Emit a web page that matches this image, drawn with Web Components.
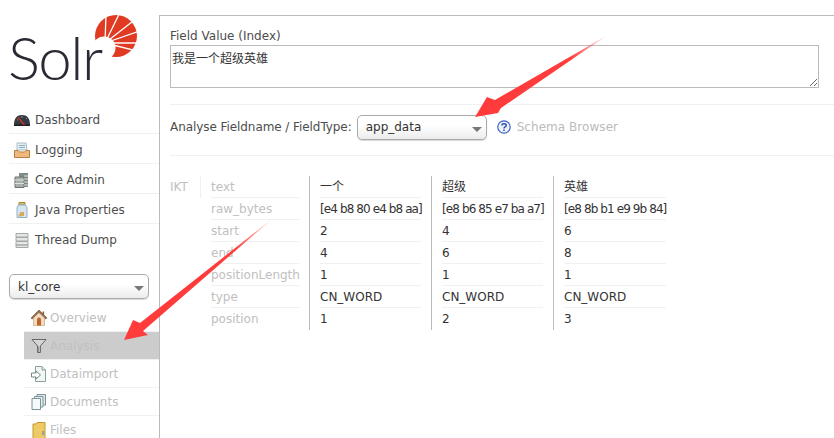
<!DOCTYPE html>
<html>
<head>
  <meta charset="utf-8">
  <title>Solr Admin - Analysis</title>
  <style type="text/css">
    html, body { margin: 0; padding: 0; background: #fff; height: 438px; overflow: hidden; }
    body { font: 12px "DejaVu Sans", "Noto Sans CJK SC", sans-serif; color: #333; }
  </style>
</head>
<body>
  <solr-app>
    <solr-sidebar slot="side">
      <solr-logo></solr-logo>
      <nav-item icon="dashboard">Dashboard</nav-item>
      <nav-item icon="logging">Logging</nav-item>
      <nav-item icon="cores">Core Admin</nav-item>
      <nav-item icon="java">Java Properties</nav-item>
      <nav-item icon="threads" last>Thread Dump</nav-item>
      <core-select>kl_core</core-select>
      <core-menu>
        <nav-item core icon="overview">Overview</nav-item>
        <nav-item core active icon="analysis">Analysis</nav-item>
        <nav-item core icon="dataimport">Dataimport</nav-item>
        <nav-item core icon="documents">Documents</nav-item>
        <nav-item core icon="files" last>Files</nav-item>
      </core-menu>
    </solr-sidebar>
    <analysis-form slot="main"></analysis-form>
    <token-table slot="main"></token-table>
  </solr-app>
  <arrow-overlay></arrow-overlay>

  <script>
  (function() {
    'use strict';

    const CJK = '"DejaVu Sans", "Noto Sans CJK SC", sans-serif';

    // 18x18 icons for the navigation
    const ICONS = {
      dashboard: `<path d="M1 14 C1 7 4 4 9 4 C14 4 17 7 17 14 Z" fill="#333a40"/><path d="M1 13.5 h16 v1.5 h-16 Z" fill="#1d1d1d"/><path d="M5 6.5 L11.5 14" stroke="#d9302c" stroke-width="1.2"/><path d="M4 9 h1 M8 6 h2 M13 7.5 h1" stroke="#8b9298"/>`,
      logging: `<path d="M4 2 H13 L14 9 H4 Z" fill="#e6eef2" stroke="#a9bcc6"/><path d="M6 4.5 h6 M6 6.5 h6" stroke="#8fb0c0"/><path d="M1.5 9.5 H5 L6.5 11 H11.5 L13 9.5 H16.5 V16.5 H1.5 Z" fill="#eeb97c" stroke="#b97f3e"/>`,
      cores: `<path d="M6 2 H15 V16 H6 Z" fill="#7f8a85"/><path d="M2 6 H11 V16.5 H2 Z" fill="#a8aeaa" stroke="#6b736f"/><path d="M2 9 H11 M2 12.5 H11 M11 5 H15 M11 8 H15 M11 11 H15 M11 14 H15" stroke="#dfe3e0"/>`,
      java: `<path d="M6 1.5 H12 V4 H6 Z" fill="#d9b96a" stroke="#a88a3c"/><path d="M5.5 4 H12.5 L14 6.5 V16.5 H4 V6.5 Z" fill="#d5e6f0" stroke="#8fb0c4"/><path d="M7 11 h4 v4 h-4 Z M5.8 13 h3 v2.6 h-3 Z" fill="#dba95b"/>`,
      threads: `<path d="M3 2.5 H15 V6 H3 Z M3 6.5 H15 V10 H3 Z M3 10.5 H15 V14 H3 Z M3 14 H15 V16.5 H3 Z" fill="#e4e7e6" stroke="#a3a8a6"/>`,
      overview: `<path d="M9 1 L17 9 L15.6 10 L9 3.4 L2.4 10 L1 9 Z" fill="#9a6a4a" stroke="#6e4630" stroke-width=".6"/><path d="M3.5 9 L9 3.8 L14.5 9 V16.5 H3.5 Z" fill="#f0dcc0" stroke="#b89a78" stroke-width=".6"/><path d="M7 10.5 a2 2 0 0 1 4 0 V16.5 H7 Z" fill="#c4622e"/><path d="M12.5 2.5 h1.6 V6 h-1.6 Z" fill="#8a5a3c"/>`,
      analysis: `<path d="M2 2.5 H16 L10.4 9 V15.5 H7.6 V9 Z" fill="#d6d6d6" stroke="#666" stroke-width="1"/><path d="M8.7 9.5 V15" stroke="#888"/>`,
      dataimport: `<path d="M5.5 1.5 H12 L15.5 5 V16.5 H5.5 Z" fill="#f2f6f4" stroke="#8aa09a"/><path d="M12 1.5 V5 H15.5" fill="#dfe8e5" stroke="#8aa09a"/><path d="M1.5 8 H6 V6 L10.5 10 L6 14 V12 H1.5 Z" fill="#fff" stroke="#6e8a82"/>`,
      documents: `<path d="M7 1.5 H15.5 V12 H7 Z" fill="#dfe8ea" stroke="#7d9298"/><path d="M4.5 3.5 H13 V14 H4.5 Z" fill="#e9f0f2" stroke="#7d9298"/><path d="M2 5.5 H10.5 V16.5 H2 Z" fill="#f6fafb" stroke="#7d9298"/>`,
      files: `<path d="M3 3 H6 L7 1.5 H15 V18 H3 Z" fill="#efc964" stroke="#c39a34"/><path d="M13 10 v4" stroke="#7a90b0" stroke-width="1.4"/>`
    };

    customElements.define('solr-app', class extends HTMLElement {
      constructor() {
        super();
        this.attachShadow({mode: 'open'}).innerHTML = `
          <style>
            :host { display: flex; height: 438px; overflow: hidden; }
            aside { flex: 0 0 159px; }
            main {
              flex: 1; margin-top: 15px; padding: 0 0 0 10px;
              border-top: 1px solid #bbb; border-left: 1px solid #bbb;
            }
          </style>
          <aside><slot name="side"></slot></aside>
          <main><slot name="main"></slot></main>`;
      }
    });

    customElements.define('solr-sidebar', class extends HTMLElement {
      constructor() {
        super();
        this.attachShadow({mode: 'open'}).innerHTML = `
          <style>
            :host { display: flex; flex-direction: column; padding-left: 9px; }
          </style>
          <slot></slot>`;
      }
    });

    customElements.define('solr-logo', class extends HTMLElement {
      constructor() {
        super();
        let rays = '';
        // white cuts fan out from the bottom-left of the sun
        [-88, -64, -38, -19, 0, 14].forEach(a => {
          rays += `<line x1="0" y1="0" x2="50" y2="0" transform="translate(105 43) rotate(${a})" stroke="#fff" stroke-width="1.3"/>`;
        });
        this.attachShadow({mode: 'open'}).innerHTML = `
          <style>
            :host { display: block; height: 104px; margin-left: -9px; position: relative; }
            span {
              position: relative; display: block; padding: 24px 0 0 8px;
              font: 300 60px/66px Lato, sans-serif; color: #2a2a35;
              letter-spacing: -1.5px;
            }
            svg { position: absolute; left: 0; top: 0; }
          </style>
          <svg width="159" height="104" viewBox="0 0 159 104">
            <circle cx="116" cy="36" r="21" fill="#e03a22"/>
            <circle cx="104" cy="48" r="11.5" fill="#fff"/>
            ${rays}
          </svg>
          <span>Solr</span>`;
      }
    });

    customElements.define('nav-item', class extends HTMLElement {
      constructor() {
        super();
        const core = this.hasAttribute('core');
        const active = this.hasAttribute('active');
        this.attachShadow({mode: 'open'}).innerHTML = `
          <style>
            :host {
              display: flex; align-items: center; box-sizing: border-box;
              height: ${core ? 28 : 30}px; gap: ${core ? 2 : 4}px;
              padding: ${core ? 0 : 2}px 0 0 ${core ? 6 : 4}px;
              border-bottom: 1px solid ${this.hasAttribute('last') ? 'transparent' : '#f0f0f0'};
              color: ${core ? '#c0c0c0' : '#4d4d4d'};
              background: ${active ? '#ccc' : 'transparent'};
            }
            svg { flex: none; }
          </style>
          <svg width="18" height="18" viewBox="0 0 18 18">${ICONS[this.getAttribute('icon')]}</svg>
          <slot></slot>`;
      }
    });

    // shared look of the two dropdown buttons
    const selectCss = `
      border: 1px solid #aaa; border-radius: 5px; box-sizing: border-box;
      background: linear-gradient(#fff 40%, #ececec);
      box-shadow: 0 1px 1px rgba(0,0,0,.15);
      display: flex; align-items: center; justify-content: space-between; color: #333;`;

    customElements.define('core-select', class extends HTMLElement {
      constructor() {
        super();
        this.attachShadow({mode: 'open'}).innerHTML = `
          <style>
            :host { ${selectCss} width: 140px; height: 25px; margin-top: 20px; padding: 0 4px 0 8px; }
            i { border: 5px solid transparent; border-top: 5px solid #777; border-bottom: 0; margin-top: 4px; }
          </style>
          <slot></slot><i></i>`;
      }
    });

    customElements.define('core-menu', class extends HTMLElement {
      constructor() {
        super();
        this.attachShadow({mode: 'open'}).innerHTML = `
          <style>
            :host { display: block; margin: 5px 0 0 15px; }
          </style>
          <slot></slot>`;
      }
    });

    customElements.define('analysis-form', class extends HTMLElement {
      constructor() {
        super();
        this.attachShadow({mode: 'open'}).innerHTML = `
          <style>
            :host { display: block; font-family: ${CJK}; }
            label { display: block; padding-top: 13px; height: 16px; line-height: 14px; color: #4d4d4d; }
            textarea {
              display: block; box-sizing: border-box; width: 649px; height: 43px; margin: 0;
              padding: 5px 1px; border: 1px solid #bbb; border-radius: 0; outline: 0;
              font: 12px/16px ${CJK}; color: #333; background: #fff;
            }
            .type {
              display: flex; align-items: center; box-sizing: border-box; height: 52px;
              margin-top: 16px; padding-bottom: 6px;
              border-top: 1px solid #f0f0f0; border-bottom: 1px solid #f0f0f0; color: #4d4d4d;
              letter-spacing: -0.07px;
            }
            .select {
              ${selectCss} width: 130px; height: 25px; margin-left: 5px; padding: 0 4px 0 8px;
              letter-spacing: 0;
            }
            .select i { border: 5px solid transparent; border-top: 5px solid #777; border-bottom: 0; margin-top: 4px; }
            svg { margin: 0 6px 0 10px; flex: none; }
            .schema { color: #bbb; letter-spacing: 0.05px; }
          </style>
          <label>Field Value (Index)</label>
          <textarea>我是一个超级英雄</textarea>
          <div class="type">
            <span>Analyse Fieldname / FieldType:</span>
            <div class="select"><span>app_data</span><i></i></div>
            <svg width="14" height="14" viewBox="0 0 14 14">
              <circle cx="7" cy="7" r="6.2" fill="#eef2fb" stroke="#3f62c8" stroke-width="1.2"/>
              <path d="M5 5.4 C5 3.2 9.2 3.2 9.2 5.4 C9.2 7 7 6.8 7 8.4 M7 9.6 V11" fill="none" stroke="#3252b4" stroke-width="1.5"/>
            </svg>
            <span class="schema">Schema Browser</span>
          </div>`;
      }
    });

    customElements.define('token-table', class extends HTMLElement {
      constructor() {
        super();
        const keys = ['text', 'raw_bytes', 'start', 'end', 'positionLength', 'type', 'position'];
        const tokens = [
          ['一个', '[e4 b8 80 e4 b8 aa]', '2', '4', '1', 'CN_WORD', '1'],
          ['超级', '[e8 b6 85 e7 ba a7]', '4', '6', '1', 'CN_WORD', '2'],
          ['英雄', '[e8 8b b1 e9 9b 84]', '6', '8', '1', 'CN_WORD', '3']
        ];
        const col = (cls, list) =>
          `<div class="${cls}">${list.map(t => `<div class="cell">${t}</div>`).join('')}</div>`;
        this.attachShadow({mode: 'open'}).innerHTML = `
          <style>
            :host { display: flex; margin-top: 20px; font-family: ${CJK}; align-items: flex-start; }
            .ikt {
              box-sizing: border-box; width: 31px; height: 22px; line-height: 23px;
              color: #c0c0c0; border-right: 1px solid #f0f0f0;
            }
            .keys { width: 88px; margin: 0 10px; color: #c0c0c0; }
            .token { border-left: 1px solid #bbb; padding: 0 10px; width: 101px; }
            .token:last-child { width: 102px; }
            .cell {
              box-sizing: border-box; height: 22px; line-height: 23px; white-space: nowrap;
              border-bottom: 1px solid #f0f0f0; color: #333;
            }
            .keys .cell { color: #c0c0c0; }
            .cell:last-child { border-bottom: 0; }
            .token .cell:nth-child(2) { letter-spacing: -0.9px; }
          </style>
          <div class="ikt">IKT</div>
          ${col('keys', keys)}
          ${tokens.map(t => col('token', t)).join('')}`;
      }
    });

    // the two red annotation arrows painted over the screenshot
    customElements.define('arrow-overlay', class extends HTMLElement {
      constructor() {
        super();
        this.attachShadow({mode: 'open'}).innerHTML = `
          <style>
            :host { position: absolute; left: 0; top: 0; pointer-events: none; }
            svg { display: block; }
          </style>
          <svg width="834" height="438" viewBox="0 0 834 438">
            <defs>
              <linearGradient id="a" gradientUnits="userSpaceOnUse" x1="606" y1="36" x2="570" y2="58">
                <stop offset="0" stop-color="#ff3b3b" stop-opacity=".2"/><stop offset="1" stop-color="#ff3b3b"/>
              </linearGradient>
              <linearGradient id="b" gradientUnits="userSpaceOnUse" x1="272" y1="219" x2="235" y2="250">
                <stop offset="0" stop-color="#ff3b3b" stop-opacity=".2"/><stop offset="1" stop-color="#ff3b3b"/>
              </linearGradient>
            </defs>
            <polygon points="606,36 495,100 487,97 475,117 498,113 501,108" fill="url(#a)"/>
            <polygon points="272,219 140,323 133,320 124,340 148,335 143,331" fill="url(#b)"/>
          </svg>`;
      }
    });
  })();
  </script>
</body>
</html>
